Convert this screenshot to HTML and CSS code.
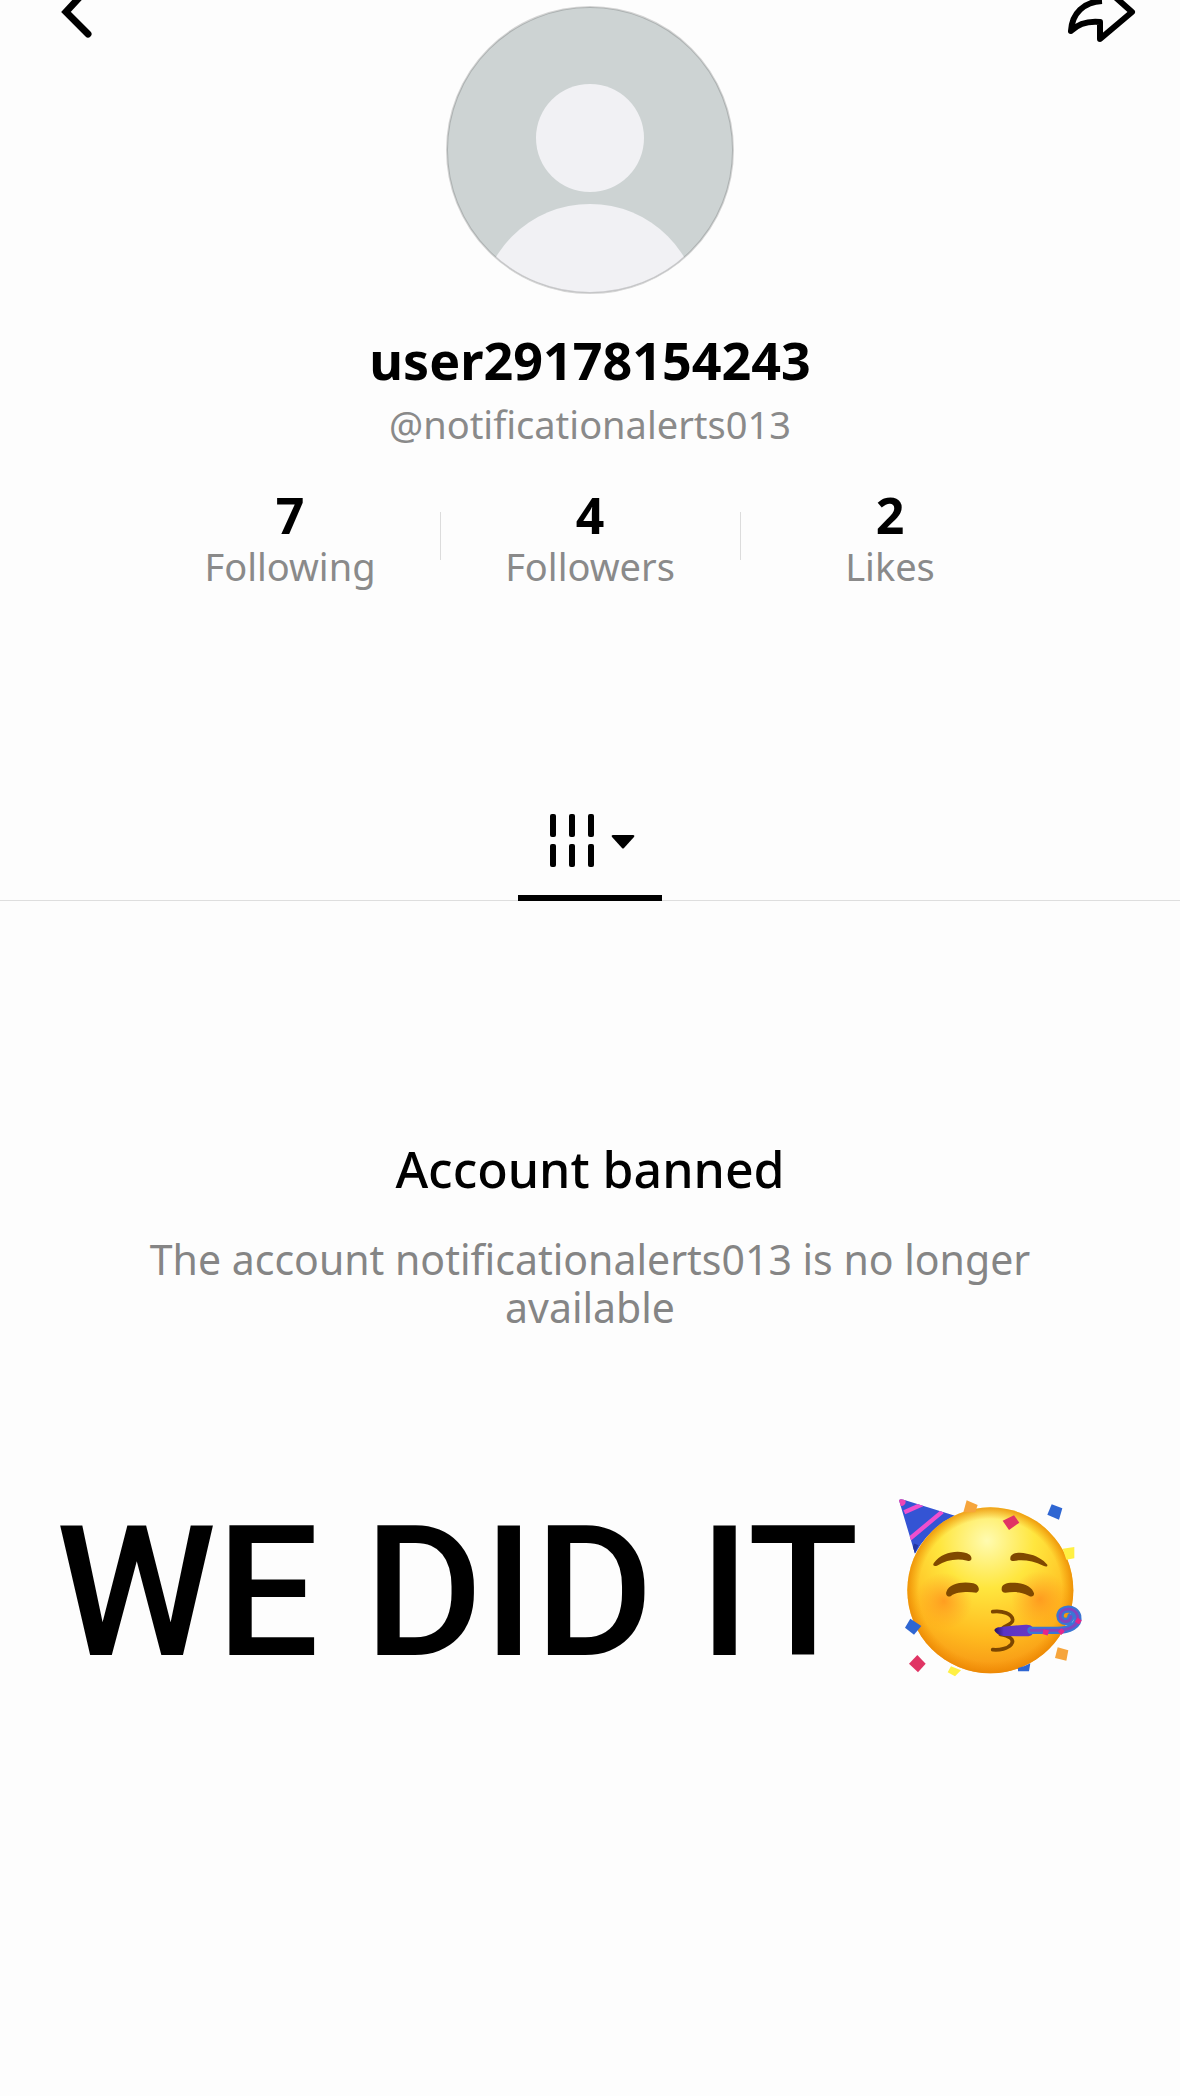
FILE: index.html
```html
<!DOCTYPE html>
<html lang="en">
<head>
    <meta charset="UTF-8">
    <meta name="viewport" content="width=device-width, initial-scale=1.0">
    <title>user29178154243</title>
    <link rel="stylesheet" href="styles.css">
</head>
<body>
    <header class="top">
        <button class="icon-button back" aria-label="Back">
            <svg width="56" height="44" viewBox="-16 0 56 44">
                <path d="M29 -12 L7 12 L29 34" fill="none" stroke="#000" stroke-width="7" stroke-linecap="round" stroke-linejoin="miter"/>
            </svg>
        </button>
        <svg class="avatar" viewBox="0 0 288 288">
            <defs>
                <clipPath id="round"><circle cx="144" cy="144" r="143"/></clipPath>
            </defs>
            <g clip-path="url(#round)">
                <rect width="288" height="288" fill="#cdd3d3"/>
                <circle cx="144" cy="132" r="54" fill="#f1f1f4"/>
                <circle cx="144" cy="308" r="110" fill="#f1f1f4"/>
            </g>
            <circle cx="144" cy="144" r="143" fill="none" stroke="#000" stroke-opacity="0.16" stroke-width="2"/>
        </svg>
        <button class="icon-button share" aria-label="Share">
            <svg width="72" height="44" viewBox="0 0 72 44">
                <path d="M37 1 C19 2 7 13 6 31 C14 23 24 21 35 22 V39 L67 12 L49 -4" fill="none" stroke="#000" stroke-width="6" stroke-linecap="butt" stroke-linejoin="round"/>
            </svg>
        </button>
    </header>

    <main>
        <section class="profile">
            <h1>user29178154243</h1>
            <p class="handle">@notificationalerts013</p>
            <div class="stats">
                <div class="stat"><strong>7</strong><span>Following</span></div>
                <div class="stat"><strong>4</strong><span>Followers</span></div>
                <div class="stat"><strong>2</strong><span>Likes</span></div>
            </div>
        </section>

        <nav class="tabs">
            <button class="tab" aria-label="Videos">
                <svg width="72" height="54" viewBox="0 0 72 54">
                    <g fill="#000">
                        <rect x="1" y="0" width="6" height="23" rx="2"/>
                        <rect x="20" y="0" width="6" height="23" rx="2"/>
                        <rect x="39" y="0" width="6" height="23" rx="2"/>
                        <rect x="1" y="30" width="6" height="23" rx="2"/>
                        <rect x="20" y="30" width="6" height="23" rx="2"/>
                        <rect x="39" y="30" width="6" height="23" rx="2"/>
                        <path d="M64 21 H84 Q86 21 85 23 L75 34 Q74 35 73 34 L63 23 Q62 21 64 21 Z"/>
                    </g>
                </svg>
            </button>
        </nav>

        <section class="banned">
            <h2>Account banned</h2>
            <p>The account notificationalerts013 is no longer available</p>
        </section>

        <div class="caption">
            <span>WE DID IT</span>
            <svg class="party" viewBox="0 0 660 630" role="img" aria-label="Party face">
                <defs>
                    <radialGradient id="face" cx="0.48" cy="0.2" r="0.82">
                        <stop offset="0" stop-color="#fffbb0"/>
                        <stop offset="0.35" stop-color="#ffe63e"/>
                        <stop offset="0.7" stop-color="#ffbc20"/>
                        <stop offset="1" stop-color="#f69112"/>
                    </radialGradient>
                    <radialGradient id="edge">
                        <stop offset="0.86" stop-color="#f08c00" stop-opacity="0"/>
                        <stop offset="1" stop-color="#e98500" stop-opacity="0.75"/>
                    </radialGradient>
                    <radialGradient id="blush">
                        <stop offset="0" stop-color="#ff7d18" stop-opacity="0.6"/>
                        <stop offset="1" stop-color="#ff8a1c" stop-opacity="0"/>
                    </radialGradient>
                    <linearGradient id="horn" x1="0" x2="1">
                        <stop offset="0" stop-color="#24105c"/>
                        <stop offset="0.25" stop-color="#5b35c4"/>
                        <stop offset="1" stop-color="#6838c2"/>
                    </linearGradient>
                    <clipPath id="hat"><path d="M60 58 Q64 52 74 56 L228 104 Q150 142 108 218 Z"/></clipPath>
                </defs>
                <g clip-path="url(#hat)">
                    <rect x="50" y="45" width="190" height="180" fill="#3454d4"/>
                    <path d="M76 94 L130 70 M84 180 L190 92" stroke="#ef4fce" stroke-width="13"/>
                    <path d="M98 222 L112 190" stroke="#2337a4" stroke-width="14"/>
                    <circle cx="67" cy="62" r="13" fill="#ed45b5"/>
                </g>
                <circle cx="334" cy="328" r="249" fill="url(#face)"/>
                <circle cx="334" cy="328" r="249" fill="url(#edge)"/>
                <circle cx="195" cy="360" r="85" fill="url(#blush)"/>
                <circle cx="482" cy="355" r="85" fill="url(#blush)"/>
                <g fill="#804900">
                    <path d="M164 247 C190 211 243 205 272 221 C281 229 279 243 265 239 C231 231 202 238 174 254 C166 257 160 254 164 247 Z"/>
                    <path d="M394 232 C394 216 419 212 444 218 C471 222 493 236 505 251 C506 259 499 257 493 254 C462 239 430 235 404 240 C396 240 393 238 394 232 Z"/>
                    <path d="M202 333 C211 307 250 301 283 307 C301 311 305 331 292 335 C266 332 234 332 216 345 C207 350 199 342 202 333 Z"/>
                    <path d="M368 323 C368 308 387 303 416 306 C442 309 461 321 465 337 C466 347 457 349 449 344 C425 330 401 333 379 335 C371 334 367 331 368 323 Z"/>
                </g>
                <path d="M341 392 C371 388 399 399 401 416 C402 429 382 433 372 441 M364 460 C389 464 408 474 397 490 C386 503 362 508 341 506" fill="none" stroke="#7c4600" stroke-width="11" stroke-linecap="round" stroke-linejoin="round"/>
                <path d="M346 448 C349 438 360 439 370 437 L440 431 Q455 430 460 437 V460 Q456 466 442 466 L374 465 Q352 462 346 448 Z" fill="url(#horn)"/>
                <path d="M456 448 H530 C570 449 602 433 596 405 C589 377 544 378 543 405 C544 427 574 426 576 407" fill="none" stroke="#3b75d4" stroke-width="22" stroke-linecap="round"/>
                <path d="M456 448 H530 C570 449 602 433 596 405 C589 377 544 378 543 405 C544 427 574 426 576 407" fill="none" stroke="#8245c0" stroke-width="9" stroke-linecap="round"/>
                <path d="M492 452 L508 456 M542 447 L552 457 M594 426 L602 414" stroke="#e3268c" stroke-width="15"/>
                <g fill="#2f66d2">
                    <path d="M518 70 L550 82 L540 116 L505 101 Z"/>
                    <path d="M94 413 L127 435 L105 461 L78 440 Z"/>
                    <path d="M417 561 Q437 557 454 547 L450 571 H417 Z"/>
                </g>
                <g fill="#e03464">
                    <path d="M405 103 L421 125 L390 147 L371 119 Z"/>
                    <path d="M115 522 L140 548 L117 574 L90 548 Z"/>
                </g>
                <g fill="#f6a53c">
                    <path d="M263 58 L296 72 L289 94 L253 94 Z"/>
                    <path d="M536 499 L568 508 L562 539 L528 531 Z"/>
                </g>
                <g fill="#fff044">
                    <path d="M551 203 L586 198 V232 L562 236 Z"/>
                    <path d="M216 556 L246 568 L228 586 L206 574 Z"/>
                </g>
            </svg>
        </div>
    </main>
</body>
</html>
```
FILE: styles.css
```css
* {
    box-sizing: border-box;
}
body {
    margin: 0;
    font-family: "Noto Sans", sans-serif;
    background-color: #fdfdfd;
    color: #000;
    text-align: center;
}
h1, h2, p {
    margin: 0;
}
button {
    padding: 0;
    border: none;
    background: none;
    cursor: pointer;
}
svg {
    display: block;
}
.top {
    display: grid;
    grid-template-columns: 1fr auto 1fr;
    align-items: start;
    padding: 0 43px;
}
.back {
    justify-self: start;
}
.share {
    justify-self: end;
}
.avatar {
    width: 288px;
    height: 288px;
    margin-top: 6px;
}
.profile h1 {
    margin-top: 34px;
    font-size: 52px;
    line-height: 64px;
    font-weight: 700;
}
.handle {
    font-size: 38px;
    line-height: 64px;
    color: #8a8a8a;
}
.stats {
    display: flex;
    justify-content: center;
    margin-top: 33px;
}
.stat {
    position: relative;
    width: 300px;
}
.stat + .stat::before {
    content: "";
    position: absolute;
    left: 0;
    top: 23px;
    width: 1px;
    height: 48px;
    background: #dcdcdc;
}
.stat strong {
    display: block;
    font-size: 50px;
    line-height: 52px;
    font-weight: 700;
}
.stat span {
    display: block;
    font-size: 38px;
    line-height: 50px;
    color: #8a8a8a;
}
.tabs {
    display: flex;
    justify-content: center;
    margin-top: 223px;
    border-bottom: 1px solid #dedede;
}
.tab {
    width: 144px;
    padding: 0 0 27px 31px;
    margin-bottom: -1px;
    border-bottom: 6px solid #000;
}
.tab svg {
    overflow: visible;
}
.banned {
    padding: 236px 120px 0;
}
.banned h2 {
    font-size: 50px;
    line-height: 64px;
    font-weight: 500;
}
.banned p {
    margin-top: 34px;
    font-size: 41px;
    line-height: 48px;
    color: #858585;
}
.caption {
    display: flex;
    align-items: flex-start;
    gap: 20px;
    padding: 0 56px;
    margin-top: 150px;
    font-family: Roboto, sans-serif;
    font-size: 182px;
    line-height: 224px;
    font-weight: 500;
    white-space: nowrap;
}
.party {
    width: 220px;
    height: 210px;
    flex: none;
}
```
